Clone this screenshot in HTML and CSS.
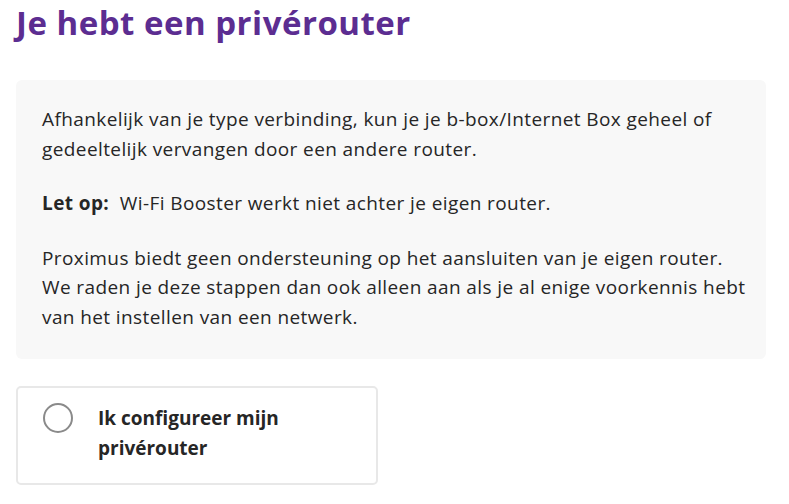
FILE: index.html
```html
<!DOCTYPE html>
<html lang="nl">
<head>
<meta charset="utf-8">
<title>Je hebt een privérouter</title>
<link rel="stylesheet" href="styles.css">
</head>
<body>
<main class="page">
  <h1 class="title">Je hebt een privérouter</h1>
  <section class="info">
    <p>Afhankelijk van je type verbinding, kun je je b-box/Internet Box geheel of gedeeltelijk vervangen door een andere router.</p>
    <p><strong>Let op:</strong>&nbsp; Wi-Fi Booster werkt niet achter je eigen router.</p>
    <p>Proximus biedt geen ondersteuning op het aansluiten van je eigen router. We raden je deze stappen dan ook alleen aan als je al enige voorkennis hebt van het instellen van een netwerk.</p>
  </section>
  <label class="option">
    <span class="radio"></span>
    <span class="option-text">Ik configureer mijn privérouter</span>
  </label>
</main>
</body>
</html>
```
FILE: styles.css
```css
* { box-sizing: border-box; }
html, body { margin: 0; padding: 0; background: #ffffff; }
body {
  font-family: "Open Sans", Lato, sans-serif;
  color: #262626;
}
.page {
  padding: 0 16px;
  display: flex;
  flex-direction: column;
  align-items: flex-start;
}
.title {
  margin: 0;
  font-size: 33px;
  line-height: 45px;
  letter-spacing: 0.5px;
  font-weight: 700;
  color: #5c2d91;
}
.info {
  margin-top: 35px;
  width: 750px;
  background: #f8f8f8;
  border-radius: 6px;
  padding: 25px 14px 27px 26px;
}
.info p {
  margin: 0 0 25px;
  font-size: 19px;
  line-height: 29.5px;
  letter-spacing: 0.4px;
}
.info p:last-child { margin-bottom: 0; }
.info strong { font-weight: 700; }
.option {
  margin-top: 27px;
  width: 362px;
  min-height: 99px;
  border: 2px solid #e8e8e8;
  border-radius: 5px;
  padding: 15px 24px 15px 25px;
  display: flex;
  align-items: flex-start;
  gap: 25px;
}
.radio {
  flex: none;
  width: 30px;
  height: 30px;
  border: 2px solid #8a8a8a;
  border-radius: 50%;
  background: #ffffff;
}
.option-text {
  font-size: 19px;
  line-height: 30px;
  font-weight: 700;
  color: #262626;
}
```
